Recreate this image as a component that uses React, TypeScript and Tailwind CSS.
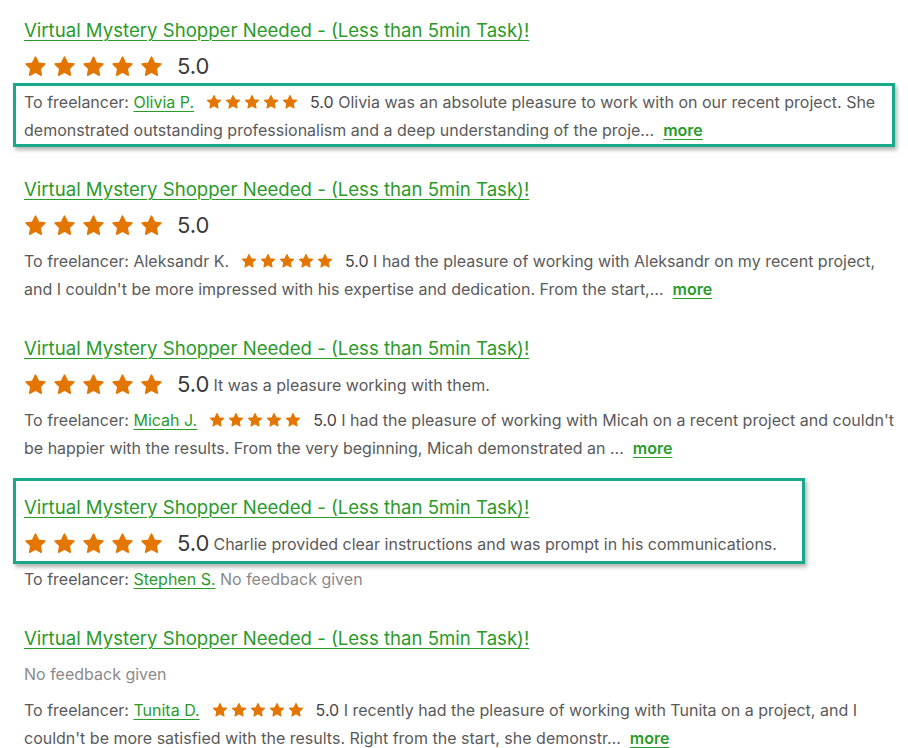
import React from "react";

const FONT = { fontFamily: 'Inter, "Liberation Sans", Arial, sans-serif' };

const Star = ({ size }: { size: number }) => (
  <svg
    width={size}
    height={size}
    viewBox="0 0 24 24"
    className="shrink-0"
    aria-hidden="true"
  >
    <path
      d="M12 2.2l3 6.3 6.9.9-5 4.8 1.2 6.9L12 17.8l-6.1 3.3 1.2-6.9-5-4.8 6.9-.9L12 2.2z"
      fill="#e37600"
      stroke="#e37600"
      strokeWidth="1.6"
      strokeLinejoin="round"
    />
  </svg>
);

const BigStars = () => (
  <div className="flex items-center gap-[6px]">
    {[0, 1, 2, 3, 4].map((i) => (
      <Star key={i} size={23} />
    ))}
  </div>
);

const SmallStars = () => (
  <span className="inline-flex items-center gap-[3px] align-[-2px] mx-[12px]">
    {[0, 1, 2, 3, 4].map((i) => (
      <Star key={i} size={16} />
    ))}
  </span>
);

const Title = () => (
  <div className="h-[28px] leading-[28px]">
    <a
      href="#"
      className="text-[18.6px] text-[#2a9b2a] underline underline-offset-[3px] decoration-[1px]"
    >
      Virtual Mystery Shopper Needed - (Less than 5min Task)!
    </a>
  </div>
);

const RatingRow = ({ comment }: { comment?: string }) => (
  <div className="flex items-center h-[28px]">
    <BigStars />
    <span className="ml-[14px] text-[22px] text-[#3a3a3a]">5.0</span>
    {comment && (
      <span className="ml-[4px] text-[16px] text-[#5a5a5a] mt-[2px]">
        {comment}
      </span>
    )}
  </div>
);

const More = () => (
  <a
    href="#"
    className="ml-[9px] text-[#2a9b2a] font-semibold underline underline-offset-[3px]"
  >
    more
  </a>
);

const Name = ({ name }: { name: string }) => (
  <a href="#" className="text-[#2a9b2a] underline underline-offset-[3px]">
    {name}
  </a>
);

const Feedback = ({
  name,
  linked = true,
  first,
  second,
}: {
  name: string;
  linked?: boolean;
  first: string;
  second: string;
}) => (
  <div className="text-[16px] leading-[28px] text-[#5a5a5a]">
    <div className="whitespace-nowrap">
      To freelancer: {linked ? <Name name={name} /> : name}
      <SmallStars />
      <span className="text-[#444]">5.0</span> {first}
    </div>
    <div className="whitespace-nowrap">
      {second}
      <More />
    </div>
  </div>
);

export default function App() {
  return (
    <div
      className="w-[908px] min-h-[748px] bg-white pl-[24px] pr-[6px] pt-[16px] flex flex-col gap-[31px]"
      style={FONT}
    >
      <section className="flex flex-col gap-[8px]">
        <Title />
        <RatingRow />
        <div className="relative">
          <div className="absolute -left-[11px] -top-[5px] -bottom-[3px] w-[882px] border-[3px] border-[#17a98a] shadow-[2px_3px_4px_rgba(0,0,0,0.3)] pointer-events-none" />
          <Feedback
            name="Olivia P."
            first="Olivia was an absolute pleasure to work with on our recent project. She"
            second="demonstrated outstanding professionalism and a deep understanding of the proje…"
          />
        </div>
      </section>

      <section className="flex flex-col gap-[8px]">
        <Title />
        <RatingRow />
        <Feedback
          name="Aleksandr K."
          linked={false}
          first="I had the pleasure of working with Aleksandr on my recent project,"
          second="and I couldn't be more impressed with his expertise and dedication. From the start,…"
        />
      </section>

      <section className="flex flex-col gap-[8px]">
        <Title />
        <RatingRow comment="It was a pleasure working with them." />
        <Feedback
          name="Micah J."
          first="I had the pleasure of working with Micah on a recent project and couldn't"
          second="be happier with the results. From the very beginning, Micah demonstrated an …"
        />
      </section>

      <section className="flex flex-col gap-[8px]">
        <div className="relative flex flex-col gap-[8px]">
          <div className="absolute -left-[11px] -top-[15px] -bottom-[7px] w-[792px] border-[3px] border-[#17a98a] shadow-[2px_3px_4px_rgba(0,0,0,0.3)] pointer-events-none" />
          <Title />
          <RatingRow comment="Charlie provided clear instructions and was prompt in his communications." />
        </div>
        <div className="text-[16px] leading-[28px] text-[#5a5a5a] whitespace-nowrap">
          To freelancer: <Name name="Stephen S." />{" "}
          <span className="text-[#8a8a8a]">No feedback given</span>
        </div>
      </section>

      <section className="flex flex-col gap-[8px]">
        <Title />
        <div className="h-[28px] leading-[28px] text-[16px] text-[#8a8a8a]">
          No feedback given
        </div>
        <Feedback
          name="Tunita D."
          first="I recently had the pleasure of working with Tunita on a project, and I"
          second="couldn't be more satisfied with the results. Right from the start, she demonstr…"
        />
      </section>
    </div>
  );
}
